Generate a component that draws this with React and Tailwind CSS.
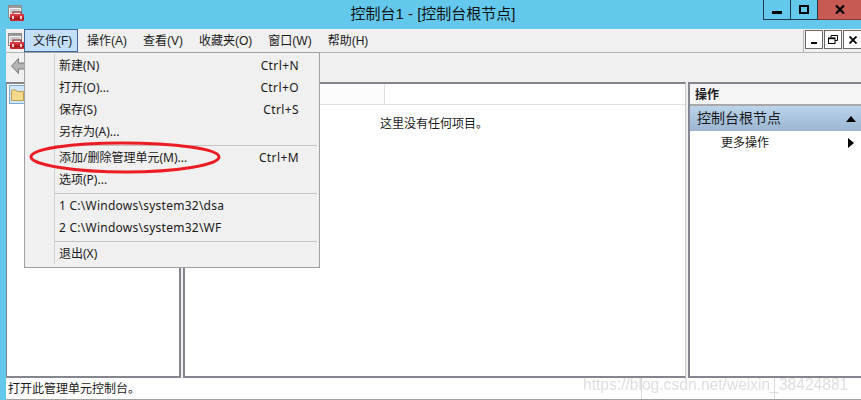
import React from 'react';

const FONT = 'font-["Liberation_Sans","Noto_Sans_CJK_SC",sans-serif]';

const ConsoleIcon = () => (
  <svg width="16" height="16" viewBox="0 0 16 16" className="block">
    <rect x="0.5" y="0.5" width="13" height="12" fill="#f2f2f2" stroke="#8c8c8c" />
    <rect x="1" y="1" width="12" height="2" fill="#9a9a9a" />
    <path d="M2 5h10M2 7h10" stroke="#a4a4a4" />
    <rect x="5" y="7" width="8" height="3" fill="none" stroke="#8e1418" />
    <rect x="2" y="9" width="14" height="7" rx="1" fill="#c4262e" />
    <rect x="2" y="9" width="14" height="2" fill="#dc3a40" />
    <rect x="2" y="13" width="14" height="1" fill="#8e1418" />
    <rect x="4" y="11" width="2" height="3" fill="#eed0d0" />
    <rect x="12" y="11" width="2" height="3" fill="#eed0d0" />
  </svg>
);

const menuBar = ['操作(A)', '查看(V)', '收藏夹(O)', '窗口(W)', '帮助(H)'];

const fileMenu = [
  { label: '新建(N)', key: 'Ctrl+N' },
  { label: '打开(O)...', key: 'Ctrl+O' },
  { label: '保存(S)', key: 'Ctrl+S' },
  { label: '另存为(A)...' },
  { sep: true },
  { label: '添加/删除管理单元(M)...', key: 'Ctrl+M' },
  { label: '选项(P)...' },
  { sep: true },
  { label: '1 C:\\Windows\\system32\\dsa', path: true },
  { label: '2 C:\\Windows\\system32\\WF', path: true },
  { sep: true },
  { label: '退出(X)' },
];

const FileMenu = () => (
  <div className='absolute left-[24px] top-[52px] w-[296px] h-[216px] bg-[#f0f0f0] border border-[#a0a0a0] pt-[2px] text-[12px] text-[#1a1a1a] z-10 font-["Noto_Sans","Noto_Sans_CJK_SC",sans-serif]'>
    <div className="absolute left-[29px] top-[1px] bottom-[3px] w-px bg-[#d0d0d0]" />
    {fileMenu.map((item, i) =>
      item.sep ? (
        <div key={i} className="h-[4px] ml-[30px] mr-[2px] flex items-center">
          <div className="w-full h-px bg-[#c4c4c4]" />
        </div>
      ) : (
        <div key={i} className="h-[22px] flex items-center justify-between pl-[34px] pr-[20px]">
          <span className={item.path ? 'tracking-[0.25px]' : ''}>{item.label}</span>
          {item.key && <span className="tracking-[0.4px]">{item.key}</span>}
        </div>
      )
    )}
  </div>
);

const App = () => {
  return (
    <div className={`${FONT} relative w-[861px] h-[400px] overflow-hidden bg-[#63c8ec] flex flex-col text-black`}>
      {/* title bar */}
      <div className="relative h-[29px] shrink-0 flex items-center justify-center pl-[5px] text-[15px] text-[#111]">
        <div className="absolute left-[8px] top-[5px]"><ConsoleIcon /></div>
        控制台1 - [控制台根节点]
        <div className="absolute right-0 top-0 flex h-[20px]">
          <div className="w-[28px] border border-t-0 border-[#1f3a4d] flex items-end justify-center pb-[5px]">
            <div className="w-[10px] h-[3px] bg-black" />
          </div>
          <div className="w-[27px] border-b border-r border-[#1f3a4d] flex items-center justify-center">
            <div className="w-[10px] h-[9px] border-2 border-black" />
          </div>
          <div className="w-[43px] border-b border-[#8c3a34] bg-[#c75b53] flex items-center justify-center">
            <svg width="10" height="9" viewBox="0 0 10 9">
              <path d="M1 0.5L9 8.5M9 0.5L1 8.5" stroke="#000" strokeWidth="2.2" />
            </svg>
          </div>
        </div>
      </div>

      <div className="flex-1 ml-[6px] bg-[#f0f0f0] flex flex-col min-h-0">
        {/* menu bar */}
        <div className="relative h-[24px] shrink-0 flex items-start border-b border-[#b4b4b4] text-[12px] text-[#1a1a1a]">
          <div className="w-[18px] pt-[4px] pl-[2px]"><ConsoleIcon /></div>
          <div className="h-[23px] w-[54px] bg-[#c4dffc] border border-[#3a6a99] pl-[8px] flex items-center">文件(F)</div>
          <div className="flex pl-px">
            {menuBar.map((m) => (
              <div key={m} className="h-[23px] px-[8px] flex items-center">{m}</div>
            ))}
          </div>
          <div className="absolute right-0 top-[1px] h-[23px] pl-[1px] border-l border-[#b4b4b4] flex gap-px">
            <div className="w-[18px] h-[19px] border border-[#666] bg-white flex items-end justify-center pb-[4px]">
              <div className="w-[6px] h-[2px] bg-black" />
            </div>
            <div className="w-[18px] h-[19px] border border-[#666] bg-white flex items-center justify-center">
              <svg width="10" height="9" viewBox="0 0 10 9" fill="none" stroke="#000">
                <path d="M3 2.5V0.5H9.5V5.5H7" />
                <rect x="0.5" y="3" width="6.5" height="5.5" />
                <path d="M0.5 3.5H7" strokeWidth="1.4" />
              </svg>
            </div>
            <div className="w-[18px] h-[19px] border border-r-0 border-[#666] bg-white flex items-center justify-center">
              <svg width="8" height="8" viewBox="0 0 8 8">
                <path d="M0.5 0.5L7.5 7.5M7.5 0.5L0.5 7.5" stroke="#000" strokeWidth="1.8" />
              </svg>
            </div>
          </div>
        </div>

        {/* toolbar */}
        <div className="h-[29px] shrink-0 pl-[5px] pt-[5px]">
          <svg width="14" height="16" viewBox="0 0 14 16">
            <path d="M7.5 0.5L0.5 8L7.5 15.5V11H13.5V5H7.5Z" fill="#b5b5b5" stroke="#777" />
          </svg>
        </div>

        {/* panes */}
        <div className="flex-1 flex min-h-0 gap-[2px]">
          <div className="w-[175px] bg-white border border-t-2 border-r-2 border-b-2 border-[#85858f] pl-[2px] pt-px">
            <div className="w-[17px] h-[19px] bg-[#cfe6fb] border border-[#7ea9d4] flex items-center justify-center">
              <svg width="13" height="12" viewBox="0 0 13 12">
                <path d="M0.5 2V11.5H12.5V2.5H6L5 1H1Z" fill="#f3d98b" stroke="#c0a050" />
              </svg>
            </div>
          </div>
          <div className="w-[503px] bg-white border-l-2 border-t-2 border-b-2 border-r border-[#85858f] border-r-[#c8c8c8] flex flex-col">
            <div className="h-[21px] shrink-0 border-b border-[#e0e0e0] flex">
              <div className="w-[200px] h-[20px] border-r border-[#e0e0e0] bg-[#fcfcfc]" />
            </div>
            <div className="pl-[195px] pt-[10px] text-[12px] text-[#1a1a1a]">这里没有任何项目。</div>
          </div>
          <div className="w-[173px] bg-white border-2 border-r-0 border-[#85858f] flex flex-col text-[12px] text-[#1a1a1a]">
            <div className="h-[22px] shrink-0 bg-[#f5f5f5] border-b-2 border-[#a8a8a8] pl-[5px] pt-px flex items-center font-bold">操作</div>
            <div className="h-[25px] shrink-0 bg-gradient-to-b from-[#bcd4ea] to-[#9ab5d2] pl-[7px] pr-[5px] flex items-center justify-between text-[14px]">
              控制台根节点
              <svg width="10" height="6" viewBox="0 0 10 6"><path d="M5 0L10 6H0Z" fill="#000" /></svg>
            </div>
            <div className="h-[24px] flex items-center justify-between pl-[31px] pr-[7px]">
              更多操作
              <svg width="6" height="10" viewBox="0 0 6 10"><path d="M0 0L6 5L0 10Z" fill="#000" /></svg>
            </div>
          </div>
        </div>

        {/* status bar */}
        <div className="relative h-[22px] shrink-0 bg-white border-b border-[#a0a0a0] pl-[2px] flex items-center text-[12px] text-[#1a1a1a]">
          打开此管理单元控制台。
          <div className="absolute left-[635px] top-0 bottom-0 w-px bg-[#d8d8d8]" />
          <div className="absolute left-[768px] top-0 bottom-0 w-px bg-[#d8d8d8]" />
        </div>
      </div>

      <FileMenu />

      {/* hand drawn annotation */}
      <svg className="absolute left-[26px] top-[136px] z-20" width="198" height="42" viewBox="0 0 198 42" fill="none">
        <path
          d="M5 21C5 13 45 7 95 7C150 7 193 13 193 21C193 29 150 36 100 36C50 36 5 29 5 21Z"
          stroke="#ec1c24"
          strokeWidth="3"
        />
      </svg>

      {/* watermark */}
      <div className="absolute left-[583px] top-[373px] z-20 text-[15.6px] font-['Liberation_Sans',sans-serif] text-[#c8c8c8]/60 blur-[0.4px] whitespace-nowrap">
        https://blog.csdn.net/weixin_38424881
      </div>
    </div>
  );
};

export default App;
